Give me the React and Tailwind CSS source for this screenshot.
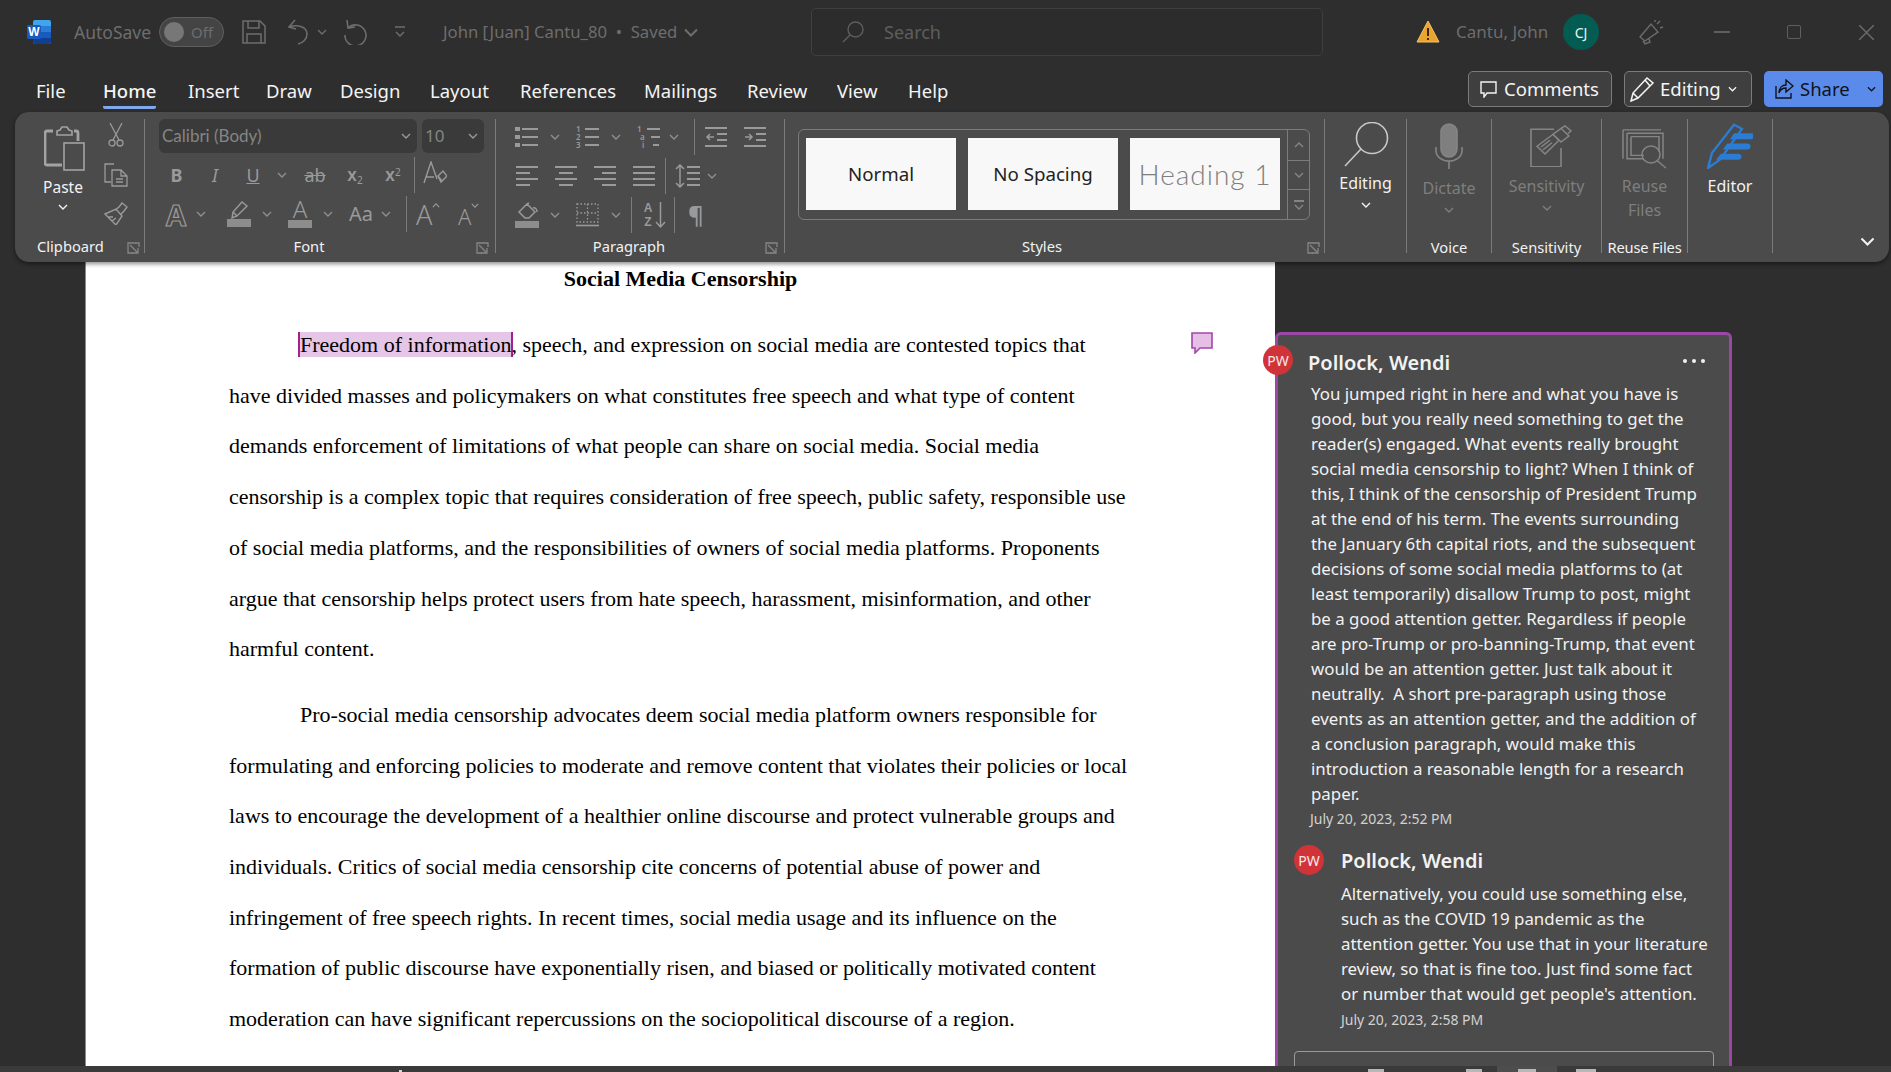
import React from "react";

const UI = "font-['Noto_Sans',sans-serif]";

const para1 = [
  "have divided masses and policymakers on what constitutes free speech and what type of content",
  "demands enforcement of limitations of what people can share on social media. Social media",
  "censorship is a complex topic that requires consideration of free speech, public safety, responsible use",
  "of social media platforms, and the responsibilities of owners of social media platforms. Proponents",
  "argue that censorship helps protect users from hate speech, harassment, misinformation, and other",
  "harmful content.",
];

const para2 = [
  "formulating and enforcing policies to moderate and remove content that violates their policies or local",
  "laws to encourage the development of a healthier online discourse and protect vulnerable groups and",
  "individuals. Critics of social media censorship cite concerns of potential abuse of power and",
  "infringement of free speech rights. In recent times, social media usage and its influence on the",
  "formation of public discourse have exponentially risen, and biased or politically motivated content",
  "moderation can have significant repercussions on the sociopolitical discourse of a region.",
];

const comment1 = [
  "You jumped right in here and what you have is",
  "good, but you really need something to get the",
  "reader(s) engaged. What events really brought",
  "social media censorship to light? When I think of",
  "this, I think of the censorship of President Trump",
  "at the end of his term. The events surrounding",
  "the January 6th capital riots, and the subsequent",
  "decisions of some social media platforms to (at",
  "least temporarily) disallow Trump to post, might",
  "be a good attention getter. Regardless if people",
  "are pro-Trump or pro-banning-Trump, that event",
  "would be an attention getter. Just talk about it",
  "neutrally.  A short pre-paragraph using those",
  "events as an attention getter, and the addition of",
  "a conclusion paragraph, would make this",
  "introduction a reasonable length for a research",
  "paper.",
];

const comment2 = [
  "Alternatively, you could use something else,",
  "such as the COVID 19 pandemic as the",
  "attention getter. You use that in your literature",
  "review, so that is fine too. Just find some fact",
  "or number that would get people's attention.",
];

const tabs = [
  ["File", "w-[103px] pl-[36px]"],
  ["Home", "w-[85px]"],
  ["Insert", "w-[78px]"],
  ["Draw", "w-[74px]"],
  ["Design", "w-[90px]"],
  ["Layout", "w-[90px]"],
  ["References", "w-[124px]"],
  ["Mailings", "w-[103px]"],
  ["Review", "w-[90px]"],
  ["View", "w-[71px]"],
  ["Help", "w-[60px]"],
];

const Svg = ({ w, h, children, className = "", sw = 1.5 }) => (
  <svg
    width={w}
    height={h}
    viewBox={`0 0 ${w} ${h}`}
    fill="none"
    stroke="currentColor"
    strokeWidth={sw}
    className={`block shrink-0 ${className}`}
  >
    {children}
  </svg>
);

const Chev = ({ className = "", w = 10, h = 6 }) => (
  <svg width={w} height={h} viewBox="0 0 10 6" fill="none" stroke="currentColor" strokeWidth="1.4" className={`block shrink-0 ${className}`}>
    <path d="M1 1l4 4 4-4" />
  </svg>
);

const RibbonChev = ({ className = "" }) => (
  <div className={`w-4 flex justify-center shrink-0 text-[#8f8f8f] ${className}`}>
    <Chev />
  </div>
);

const VSep = ({ className = "" }) => <div className={`w-px bg-[#7c7c7c] self-stretch shrink-0 ${className}`} />;

const AlignIcon = ({ rows }) => (
  <Svg w={22} h={22} className="text-[#9a9a9a]" sw={2}>
    {rows.map(([a, b], i) => (
      <path key={i} d={`M${a} ${2 + i * 6}H${b}`} />
    ))}
  </Svg>
);

const Launcher = ({ className = "" }) => (
  <svg width="13" height="12" viewBox="0 0 13 12" fill="none" stroke="#868686" strokeWidth="1.3" className={`absolute bottom-[-1px] ${className}`}>
    <path d="M12 5V1H1v10h5" />
    <path d="M3 3l7 7M5 11h6V6" />
  </svg>
);

const Group = ({ width, label, children, launcher, labelClass = "" }) => (
  <div className={`relative shrink-0 h-[134px] border-r border-[#7c7c7c] ${width}`}>
    <div className="h-[116px]">{children}</div>
    {label && <div className={`mt-[2px] h-5 leading-5 text-center text-[14.7px] text-[#f2f2f2] whitespace-nowrap ${labelClass}`}>{label}</div>}
    {launcher}
  </div>
);

const TitleBar = () => (
  <div className="h-[64px] flex items-center text-[#6d6d6d] shrink-0">
    <svg width="24" height="24" viewBox="0 0 24 24" className="block ml-[27px] shrink-0">
      <rect x="6" y="0" width="18" height="24" rx="2" fill="#41a5ee" />
      <rect x="6" y="6" width="18" height="6" fill="#2b7cd3" />
      <rect x="6" y="12" width="18" height="6" fill="#185abd" />
      <path d="M6 18h18v4a2 2 0 0 1-2 2H8a2 2 0 0 1-2-2z" fill="#103f91" />
      <rect x="0" y="5" width="14" height="14" rx="1.5" fill="#185abd" />
      <text x="7" y="16" textAnchor="middle" fontSize="12" fontWeight="700" fill="#fff" fontFamily="'Liberation Sans',sans-serif">W</text>
    </svg>
    <span className="ml-[23px] text-[17.5px] whitespace-nowrap w-[85px]">AutoSave</span>
    <div className="w-[65px] h-[30px] rounded-full border border-[#5f5f5f] bg-[#444] flex items-center pl-[4px] shrink-0">
      <div className="w-[20px] h-[20px] rounded-full bg-[#777]" />
      <span className="ml-[7px] text-[15px] text-[#6d6d6d]">Off</span>
    </div>
    <Svg w={24} h={24} className="ml-[18px]">
      <path d="M1 1h17l5 5v17H1z" />
      <path d="M6 1v7h11V1M5 23v-9h14v9" />
    </Svg>
    <Svg w={22} h={26} className="ml-[21px]" sw={1.6}>
      <path d="M8 1L2 8l7 2M2 8c9-3 18 0 18 7 0 5-4 9-9 10" />
    </Svg>
    <Chev className="ml-[8px]" />
    <Svg w={26} h={26} className="ml-[16px]" sw={1.6}>
      <path d="M4 1l1 8 7-1M5 9a10.5 10.5 0 1 1-3 7" />
    </Svg>
    <Svg w={12} h={14} className="ml-[25px]">
      <path d="M1 2h10M2 7l4 4 4-4" />
    </Svg>
    <span className="ml-[37px] text-[16.7px] whitespace-nowrap w-[240px]">John [Juan] Cantu_80 &nbsp;•&nbsp; Saved</span>
    <Chev w={16} h={9} />
    <div className="ml-[112px] w-[512px] h-[48px] rounded-[5px] border border-[#3f3f3f] bg-[#2c2c2c] flex items-center pl-[30px] shrink-0">
      <Svg w={22} h={22} className="text-[#5e5e5e]" sw={1.4}>
        <circle cx="13.5" cy="8.5" r="7.5" />
        <path d="M8 14l-7 7" />
      </Svg>
      <span className="ml-[20px] text-[18px] text-[#5e5e5e]">Search</span>
    </div>
    <svg width="24" height="24" viewBox="0 0 24 24" className="block ml-[93px] shrink-0">
      <path d="M12 1l11 21H1z" fill="#eba42e" stroke="#f5c267" strokeWidth="1" />
      <path d="M12 8v8M12 18v2" stroke="#3a2a10" strokeWidth="2" />
    </svg>
    <span className="ml-[16px] text-[17px] whitespace-nowrap w-[107px]">Cantu, John</span>
    <div className="w-[36px] h-[36px] rounded-full bg-[#035c52] text-[#f0f0f0] text-[14px] flex items-center justify-center shrink-0">CJ</div>
    <Svg w={26} h={26} className="ml-[40px]" sw={1.4}>
      <path d="M1 18L12 5l7 8-13 9zM4 22l2 3 5-2-1-3M18 5l3-3M21 9l3-1M16 3V1" />
    </Svg>
    <div className="ml-[49px] w-[16px] h-[2px] bg-[#5f5f5f] shrink-0" />
    <div className="ml-[57px] w-[14px] h-[14px] rounded-[2px] border-[1.5px] border-[#5f5f5f] shrink-0" />
    <Svg w={15} h={15} className="ml-[58px] text-[#6a6a6a]">
      <path d="M0 0l15 15M15 0L0 15" />
    </Svg>
  </div>
);

const TabRow = () => (
  <div className="h-[48px] flex items-start shrink-0 text-[#f4f4f4] text-[18.5px]">
    {tabs.map(([name, w]) => (
      <div key={name} className={`${w} h-full pt-[13px] shrink-0 whitespace-nowrap`}>
        <span className={`inline-block leading-[26px] ${name === "Home" ? "font-medium border-b-[3px] border-[#7fa8ee] pb-[2px] rounded-b-[2px]" : ""}`}>{name}</span>
      </div>
    ))}
    <div className="ml-[500px] mt-[7px] w-[144px] h-[36px] rounded-[5px] border border-[#7b7b7b] bg-[#3f3f3f] flex items-center pl-[11px] shrink-0">
      <Svg w={17} h={17} sw={1.4}>
        <path d="M1 1h15v11H7l-3 4v-4H1z" />
      </Svg>
      <span className="ml-[7px] whitespace-nowrap">Comments</span>
    </div>
    <div className="ml-[12px] mt-[7px] w-[128px] h-[36px] rounded-[5px] border border-[#7b7b7b] bg-[#3f3f3f] flex items-center pl-[5px] shrink-0">
      <Svg w={24} h={26} sw={1.5}>
        <path d="M1 25l2-8L17 2l6 5L8 22zM3 17l5 5M15 4l5 6" />
      </Svg>
      <span className="ml-[6px] whitespace-nowrap">Editing</span>
      <Chev className="ml-[7px]" w={9} h={6} />
    </div>
    <div className="ml-[12px] mt-[7px] w-[119px] h-[36px] rounded-[5px] bg-[#5b8bea] text-[#10131a] flex items-center pl-[11px] shrink-0">
      <Svg w={19} h={20} sw={1.4}>
        <path d="M1 7v12h15v-5M11 1l7 6-7 6V9c-4 0-6 2-7 5 0-5 3-8 7-8z" />
      </Svg>
      <span className="ml-[6px] whitespace-nowrap">Share</span>
      <Chev className="ml-[17px]" w={9} h={6} />
    </div>
  </div>
);

const Clipboard = () => (
  <Group width="w-[130px]" label="Clipboard" labelClass="text-left pl-[22px] -translate-y-px" launcher={<Launcher className="right-[4px]" />}>
    <div className="flex h-full text-[#9a9a9a]">
      <div className="w-[96px] flex flex-col items-center pt-[6px]">
        <Svg w={41} h={46} sw={1.6} className="text-[#a3a3a3] ml-[3px]">
          <path d="M13 6l3-1 2-3h5l2 3 3 1v4H13z" />
          <path d="M9 6H3a2 2 0 0 0-2 2v30a2 2 0 0 0 2 2h15M30 6h2a2 2 0 0 1 2 2v8" strokeWidth="2.8" />
          <rect x="20" y="18" width="20" height="27" />
        </Svg>
        <span className="mt-[4px] text-[15.5px] leading-6 text-[#f2f2f2]">Paste</span>
        <Chev className="mt-[5px] text-[#f2f2f2]" />
      </div>
      <div className="w-[32px] -ml-[11px] flex flex-col items-center pt-[4px]">
        <Svg w={16} h={24} sw={1.3}>
          <path d="M2 0l9 17M14 0L5 17" />
          <circle cx="4" cy="20" r="3" />
          <circle cx="12" cy="20" r="3" />
        </Svg>
        <Svg w={24} h={24} className="mt-[16px]" sw={1.3}>
          <path d="M10 1H1v18h6M8 7h9l6 6v10H8zM17 7v6h6M12 16h7M12 19h7" />
        </Svg>
        <Svg w={24} h={23} className="mt-[15px]" sw={1.4}>
          <path d="M1 12l11-5 6 7-6 9zM11 8l4-3 3-4 5 4-3 4-3 3M4 15l5 0M8 19l4-3" />
        </Svg>
      </div>
    </div>
  </Group>
);

const Font = () => (
  <Group width="w-[351px]" label="Font" labelClass="pr-[22px] -translate-y-px" launcher={<Launcher className="right-[6px]" />}>
    <div className="pl-[14px] text-[#9a9a9a]">
      <div className="flex gap-[5px] h-[34px]">
        <div className="w-[258px] rounded-[6px] bg-[#3a3a3a] flex items-center pl-[3px] pr-[6px] justify-between">
          <span className="text-[17px] text-[#858585] font-['Lato',sans-serif]">Calibri (Body)</span>
          <Chev />
        </div>
        <div className="w-[62px] rounded-[6px] bg-[#3a3a3a] flex items-center pl-[3px] pr-[6px] justify-between">
          <span className="text-[17px] text-[#858585]">10</span>
          <Chev />
        </div>
      </div>
      <div className="flex items-center h-[36px] mt-[4px]">
        <span className="w-[35px] text-center text-[18px] font-bold">B</span>
        <span className="w-[42px] text-center text-[18px] italic">I</span>
        <span className="w-[34px] text-center text-[18px] underline">U</span>
        <RibbonChev className="ml-[4px]" />
        <span className="ml-[4px] w-[42px] text-center text-[18px] line-through">ab</span>
        <span className="w-[38px] text-center text-[17px] font-semibold">x<sub className="text-[10px] font-normal">2</sub></span>
        <span className="w-[38px] text-center text-[17px] font-semibold">x<sup className="text-[10px] font-normal">2</sup></span>
        <VSep className="ml-[2px]" />
        <div className="w-[40px] flex justify-center">
          <Svg w={24} h={28} sw={1.4}>
            <path d="M1 22L8 1l6 17M3 16h8" />
            <path d="M15 15l5-5 4 5-6 6z" />
            <path d="M15 15l4 5" />
          </Svg>
        </div>
      </div>
      <div className="flex items-center h-[36px] mt-[3px]">
        <span className="w-[34px] text-center text-[29px] leading-none font-bold text-[#4a4a4a] [-webkit-text-stroke:1.2px_#9a9a9a]">A</span>
        <RibbonChev />
        <div className="ml-[18px] w-[24px] flex flex-col items-center">
          <Svg w={24} h={18} sw={1.4}>
            <path d="M5 17l1-6L15 1l5 4-10 10zM6 11l4 4" />
          </Svg>
          <div className="w-[24px] h-[8px] bg-[#8d8d8d]" />
        </div>
        <RibbonChev className="ml-[8px]" />
        <div className="ml-[13px] w-[24px] flex flex-col items-center">
          <span className="text-[24px] leading-[18px] h-[20px] font-light">A</span>
          <div className="w-[24px] h-[8px] bg-[#8d8d8d]" />
        </div>
        <RibbonChev className="ml-[8px]" />
        <span className="ml-[13px] w-[26px] text-[20px] whitespace-nowrap">Aa</span>
        <RibbonChev className="ml-[3px]" />
        <VSep className="ml-[12px]" />
        <div className="ml-[9px] w-[26px] flex items-start">
          <span className="text-[27px] leading-none font-light">A</span>
          <Chev className="rotate-180 mt-[2px]" w={8} h={5} />
        </div>
        <div className="ml-[16px] w-[26px] flex items-start">
          <span className="text-[22px] leading-none font-light mt-[4px]">A</span>
          <Chev className="mt-[2px]" w={8} h={5} />
        </div>
      </div>
    </div>
  </Group>
);

const Paragraph = () => (
  <Group width="w-[289px]" label="Paragraph" labelClass="pr-[22px] -translate-y-px" launcher={<Launcher className="right-[6px]" />}>
    <div className="pl-[19px] text-[#9a9a9a]">
      <div className="flex items-center h-[36px]">
        <Svg w={23} h={22} sw={2}>
          <path d="M7 3h16M7 11h16M7 19h16" />
          <path d="M0 3h5M0 11h5M0 19h5" strokeWidth="4" />
        </Svg>
        <RibbonChev className="ml-[9px]" />
        <div className="ml-[13px] w-[24px] flex items-center relative">
          <div className="flex flex-col text-[8px] leading-[8px] w-[8px] font-semibold">
            <span>1</span>
            <span>2</span>
            <span>3</span>
          </div>
          <Svg w={15} h={22} sw={2}>
            <path d="M1 3h14M1 11h14M1 19h14" />
          </Svg>
        </div>
        <RibbonChev className="ml-[8px]" />
        <div className="ml-[13px] w-[23px] flex items-center">
          <div className="flex flex-col text-[8px] leading-[8px] w-[8px] font-semibold">
            <span>1</span>
            <span className="pl-[3px]">a</span>
            <span className="pl-[5px]">i</span>
          </div>
          <Svg w={15} h={22} sw={2}>
            <path d="M2 3h13M6 11h9M8 19h6" />
          </Svg>
        </div>
        <RibbonChev className="ml-[6px]" />
        <VSep className="ml-[12px]" />
        <Svg w={22} h={22} className="ml-[10px]" sw={2}>
          <path d="M0 2h22M12 8h10M12 14h10M0 20h22" />
          <path d="M9 11H2M5 8l-3 3 3 3" strokeWidth="1.5" />
        </Svg>
        <Svg w={22} h={22} className="ml-[17px]" sw={2}>
          <path d="M0 2h22M12 8h10M12 14h10M0 20h22" />
          <path d="M1 11h7M5 8l3 3-3 3" strokeWidth="1.5" />
        </Svg>
      </div>
      <div className="flex items-center h-[36px] mt-[3px]">
        <div className="ml-[1px]">
          <AlignIcon rows={[[0, 22], [0, 14], [0, 22], [0, 14]]} />
        </div>
        <div className="ml-[17px]">
          <AlignIcon rows={[[0, 22], [4, 18], [0, 22], [4, 18]]} />
        </div>
        <div className="ml-[17px]">
          <AlignIcon rows={[[0, 22], [8, 22], [0, 22], [8, 22]]} />
        </div>
        <div className="ml-[17px]">
          <AlignIcon rows={[[0, 22], [0, 22], [0, 22], [0, 22]]} />
        </div>
        <VSep className="ml-[10px]" />
        <Svg w={25} h={24} className="ml-[9px]" sw={2}>
          <path d="M12 3h13M12 9h13M12 15h13M12 21h13" />
          <path d="M5 1v22M1 5l4-4 4 4M1 19l4 4 4-4" strokeWidth="1.5" />
        </Svg>
        <RibbonChev className="ml-[4px]" />
      </div>
      <div className="flex items-center h-[36px] mt-[3px]">
        <div className="w-[24px] flex flex-col items-center">
          <Svg w={24} h={19} sw={1.5}>
            <path d="M4 10l8-8 8 8-6 6h-4zM12 2l2-1M18 6c2-1 4 1 4 4" />
          </Svg>
          <div className="w-[24px] h-[7px] bg-[#8d8d8d]" />
        </div>
        <RibbonChev className="ml-[8px]" />
        <Svg w={23} h={24} className="ml-[13px]" sw={1.3}>
          <path d="M1 1h21v18H1zM11.5 1v18M1 10h21" strokeDasharray="1.5 2" />
          <path d="M0 22.5h23" strokeWidth="1.6" />
        </Svg>
        <RibbonChev className="ml-[9px]" />
        <VSep className="ml-[7px]" />
        <div className="ml-[9px] w-[25px] flex items-center">
          <div className="flex flex-col items-center text-[12px] leading-[14px] w-[14px] font-bold font-['Liberation_Sans',sans-serif]">
            <span>A</span>
            <span>Z</span>
          </div>
          <Svg w={11} h={28} sw={1.5}>
            <path d="M5.5 1v25M1 21l4.5 5 4.5-5" />
          </Svg>
        </div>
        <VSep className="ml-[8px]" />
        <span className="ml-[13px] w-[16px] text-[24px] leading-none font-semibold">¶</span>
      </div>
    </div>
  </Group>
);

const StyleCard = ({ children, className = "" }) => (
  <div className={`w-[150px] h-[72px] bg-[#f8f8f8] flex items-center justify-center shrink-0 whitespace-nowrap ${className}`}>{children}</div>
);

const Styles = () => (
  <Group width="w-[540px]" label="Styles" labelClass="pr-[25px] -translate-y-px" launcher={<Launcher className="right-[4px]" />}>
    <div className="pl-[13px] pt-[10px]">
      <div className="w-[512px] h-[91px] rounded-[6px] border border-[#7c7c7c] flex pl-[7px]">
        <div className="flex gap-[12px] pt-[8px]">
          <StyleCard className="text-[18.7px] text-[#222]">Normal</StyleCard>
          <StyleCard className="text-[18.7px] text-[#222]">No Spacing</StyleCard>
          <StyleCard className="text-[28px] text-[#7f7f7f] font-['Lato',sans-serif] font-light tracking-[1px]">Heading 1</StyleCard>
        </div>
        <div className="ml-[7px] w-[22px] border-l border-[#7c7c7c] flex flex-col text-[#858585]">
          <div className="h-[31px] border-b border-[#7c7c7c] flex items-center justify-center">
            <Chev className="rotate-180" />
          </div>
          <div className="h-[29px] border-b border-[#7c7c7c] flex items-center justify-center">
            <Chev />
          </div>
          <div className="flex-1 flex flex-col items-center justify-center gap-[2px]">
            <div className="w-[10px] h-[2px] bg-[#858585]" />
            <Chev />
          </div>
        </div>
      </div>
    </div>
  </Group>
);

const BigButton = ({ width, icon, title, label, dim, labelClass = "", chev }) => (
  <Group width={width} label={label} labelClass={labelClass}>
    <div className="flex flex-col items-center h-full">
      {icon}
      {title.map((t) => (
        <span key={t} className={`text-[16px] leading-6 whitespace-nowrap ${dim ? "text-[#7e7e7e]" : "text-[#f2f2f2]"}`}>
          {t}
        </span>
      ))}
      {chev && <Chev className={`mt-[7px] ${dim ? "text-[#7e7e7e]" : "text-[#f2f2f2]"}`} />}
    </div>
  </Group>
);

const Ribbon = () => (
  <div className="ml-[15px] mr-[2px] h-[150px] rounded-[14px] bg-[#4b4b4b] pt-[7px] flex shrink-0 relative z-10 shadow-[0_2px_4px_rgba(0,0,0,0.45)] font-['Noto_Sans',sans-serif]">
    <Clipboard />
    <Font />
    <Paragraph />
    <Styles />
    <BigButton
      width="w-[82px]"
      title={["Editing"]}
      chev
      icon={
        <Svg w={46} h={45} className="mt-[3px] mb-[4px] text-[#c8c8c8]" sw={1.6}>
          <circle cx="29" cy="16" r="15.5" />
          <path d="M18 27L2 44" />
        </Svg>
      }
    />
    <BigButton
      width="w-[85px]"
      title={["Dictate"]}
      label="Voice"
      dim
      chev
      icon={
        <Svg w={30} h={46} className="mt-[4px] mb-[7px] text-[#858585]" sw={1.6}>
          <rect x="7" y="1" width="16" height="33" rx="8" fill="#7f7f7f" />
          <path d="M2 24v4a13 10 0 0 0 26 0v-4M15 38v8" />
        </Svg>
      }
    />
    <BigButton
      width="w-[110px]"
      title={["Sensitivity"]}
      label="Sensitivity"
      dim
      chev
      icon={
        <Svg w={42} h={42} className="mt-[6px] mb-[7px] text-[#858585] ml-[8px]" sw={1.6}>
          <g transform="scale(1,0.85)">
            <path d="M24 5H1v44h30V27" />
            <path d="M7 25l16-14 6 7-14 16zM11 26l9-8M13 29l9-8" />
            <path d="M23 11l8-7 8 9-8 7zM31 4l4-3 6 6-3 3" />
          </g>
        </Svg>
      }
    />
    <BigButton
      width="w-[86px]"
      title={["Reuse", "Files"]}
      label="Reuse Files"
      labelClass="tracking-[-0.2px]"
      dim
      icon={
        <Svg w={46} h={40} className="mt-[10px] mb-[5px] text-[#858585]" sw={1.5}>
          <g transform="scale(1,0.85)">
            <path d="M1 1h38M1 1v34M5 5h36v30M5 5v30h17M9 9h28v18M9 9v22h13" />
            <ellipse cx="29" cy="30" rx="9" ry="10" />
            <path d="M35 37l9 9" />
          </g>
        </Svg>
      }
    />
    <BigButton
      width="w-[85px]"
      title={["Editor"]}
      icon={
        <svg width="46" height="46" viewBox="0 0 46 54" preserveAspectRatio="none" className="block mt-[4px] mb-[5px] shrink-0">
          <path d="M1 53l4-18L27 2l8 5-22 36z" fill="none" stroke="#2b7cd3" strokeWidth="2.5" />
          <path d="M27 12h17a3.5 3.5 0 0 1 0 7H23zM20 24h20a3.5 3.5 0 0 1 0 7H16zM14 36h17a3.5 3.5 0 0 1 0 7H9z" fill="#2b7cd3" />
        </svg>
      }
    />
    <div className="absolute right-[14px] bottom-[16px] text-[#f2f2f2]">
      <Chev w={15} h={9} />
    </div>
  </div>
);

const Doc = () => (
  <div className="relative ml-[85px] w-[1190px] h-full shrink-0 bg-white border-l border-[#8a8a8a] text-black font-['Liberation_Serif',serif] text-[22px] leading-[50.7px]">
    <div className="h-[34px] leading-[34px] text-center font-bold">Social Media Censorship</div>
    <div className="mt-[24px] pl-[143px] whitespace-nowrap">
      <div className="pl-[71px]">
        <span className="bg-[#e6c6e6] border-x-2 border-[#a3218e] -mx-[2px]">Freedom of information</span>
        <span>, speech, and expression on social media are contested topics that</span>
      </div>
      {para1.map((l) => (
        <div key={l}>{l}</div>
      ))}
      <div className="pl-[71px] mt-[15px]">Pro-social media censorship advocates deem social media platform owners responsible for</div>
      {para2.map((l) => (
        <div key={l}>{l}</div>
      ))}
    </div>
    <svg width="22" height="22" viewBox="0 0 22 22" className="absolute left-[1105px] top-[70px]">
      <path d="M1 1h20v15H9l-5 5v-5H1z" fill="#e6bfe6" stroke="#a347a8" strokeWidth="1.6" />
    </svg>
  </div>
);

const Avatar = ({ className = "" }) => (
  <div className={`absolute w-[30px] h-[30px] rounded-full bg-[#d13438] text-[#f6e9e9] text-[14px] flex items-center justify-center ${className}`}>PW</div>
);

const Comment = () => (
  <div className={`relative mt-[70px] w-[457px] shrink-0 self-stretch border-[3px] border-b-0 border-[#9a47a6] rounded-t-[6px] bg-[#4b4b4b] pt-[14px] text-[#f2f2f2] ${UI}`}>
    <Avatar className="left-[-15px] top-[10px]" />
    <div className="pl-[30px] h-[28px] leading-[28px] text-[20px] font-semibold whitespace-nowrap">Pollock, Wendi</div>
    <div className="absolute right-[24px] top-[24px] flex gap-[5px]">
      <div className="w-[4px] h-[4px] rounded-full bg-[#f2f2f2]" />
      <div className="w-[4px] h-[4px] rounded-full bg-[#f2f2f2]" />
      <div className="w-[4px] h-[4px] rounded-full bg-[#f2f2f2]" />
    </div>
    <div className="pl-[33px] mt-[4px] text-[16.85px] leading-[25px] whitespace-nowrap">
      {comment1.map((l) => (
        <div key={l} className="whitespace-pre">{l}</div>
      ))}
    </div>
    <div className="pl-[32px] text-[14px] leading-[25px] text-[#d2d2d2] whitespace-nowrap">July 20, 2023, 2:52 PM</div>
    <div className="relative mt-[16px] pl-[63px]">
      <Avatar className="left-[16px] top-[-2px]" />
      <div className="h-[28px] leading-[28px] text-[20px] font-semibold whitespace-nowrap">Pollock, Wendi</div>
      <div className="mt-[6px] text-[16.85px] leading-[25px] whitespace-nowrap">
        {comment2.map((l) => (
          <div key={l}>{l}</div>
        ))}
      </div>
      <div className="mt-[1px] text-[14px] leading-[25px] text-[#d2d2d2] whitespace-nowrap">July 20, 2023, 2:58 PM</div>
    </div>
    <div className="ml-[16px] mt-[19px] w-[420px] h-[40px] rounded-t-[4px] border border-[#9a9a9a]" />
  </div>
);

const StatusBar = () => (
  <div className="h-[6px] bg-[#3a3a3a] flex shrink-0 relative z-10 overflow-hidden">
    <div className="ml-[399px] mt-[4px] w-[3px] h-[2px] bg-[#d8d8d8]" />
    <div className="ml-[966px] mt-[3px] w-[16px] h-[3px] bg-[#b8b8b8]" />
    <div className="ml-[82px] mt-[3px] w-[16px] h-[3px] bg-[#b8b8b8]" />
    <div className="ml-[15px] w-[60px] bg-[#4d4d4d] flex justify-center">
      <div className="mt-[3px] w-[18px] h-[3px] bg-[#b8b8b8]" />
    </div>
    <div className="ml-[19px] mt-[3px] w-[20px] h-[3px] bg-[#b8b8b8]" />
  </div>
);

export default function App() {
  return (
    <div className={`w-[1891px] h-[1072px] overflow-hidden bg-[#2e2e2e] flex flex-col ${UI}`}>
      <TitleBar />
      <TabRow />
      <Ribbon />
      <div className="flex-1 min-h-0 flex overflow-hidden">
        <Doc />
        <Comment />
      </div>
      <StatusBar />
    </div>
  );
}
